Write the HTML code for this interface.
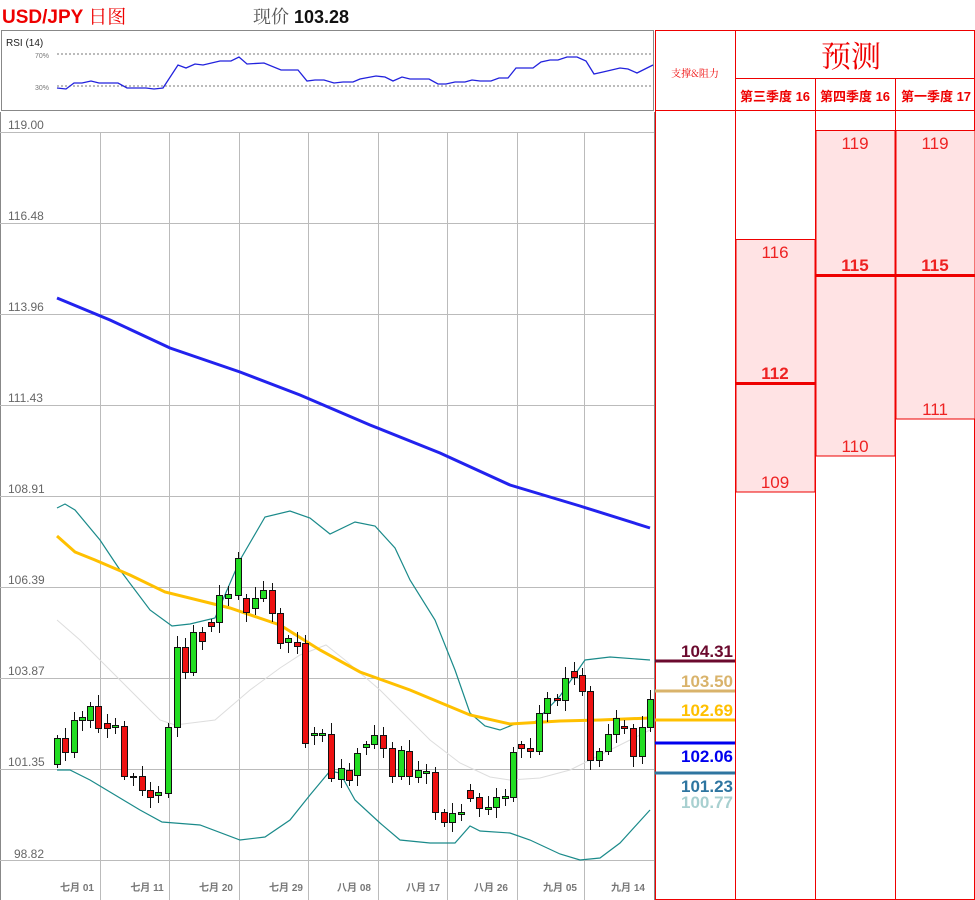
<!DOCTYPE html>
<html><head><meta charset="utf-8"><style>
body{margin:0;width:975px;height:900px;background:#fff;position:relative;overflow:hidden;font-family:"Liberation Sans","Noto Sans CJK SC",sans-serif}
.a{position:absolute}
.t{color:#e00;text-align:center}
</style></head><body>
<div class="a" style="left:2px;top:2px;font-size:19px;font-weight:bold;color:#e00;">USD/JPY <span style="font-family:'Noto Serif CJK SC',serif;font-weight:normal">日图</span></div>
<div class="a" style="left:253px;top:3px;font-size:18px;color:#555;"><span style="font-family:'Noto Serif CJK SC',serif">现价</span> <b style="color:#111">103.28</b></div>

<svg class="a" style="left:0;top:0" width="975" height="900">
<!-- RSI box -->
<rect x="1.5" y="30.5" width="652" height="80" fill="#fff" stroke="#888"/>
<text x="6" y="46" font-size="10" fill="#222" font-family="Liberation Sans">RSI (14)</text>
<text x="35" y="58" font-size="7" fill="#777">70%</text>
<text x="35" y="90" font-size="7" fill="#777">30%</text>
<line x1="57" y1="54" x2="653" y2="54" stroke="#777" stroke-dasharray="2,2"/>
<line x1="57" y1="86" x2="653" y2="86" stroke="#777" stroke-dasharray="2,2"/>
<polyline fill="none" stroke="#22d" stroke-width="1.3" points="57,88 66,89 74,83 82,83 91,81 99,83 118,83 127,88 146,88 154,89 163,88 178,65 186,68 195,64 203,65 220,61 231,61 239,57 247,64 264,63 281,70 298,70 307,81 315,80 324,80 334,83 343,82 353,82 360,79 376,76 385,77 393,81 402,77 410,79 429,79 438,84 446,84 455,82 465,82 472,80 480,81 491,81 499,78 508,78 516,68 533,68 541,62 550,60 558,60 567,57 577,57 586,61 594,74 603,72 620,68 628,69 637,73 653,65"/>
<!-- main chart frame -->
<line x1="0.5" y1="112" x2="0.5" y2="900" stroke="#888"/>
<line x1="654.5" y1="112" x2="654.5" y2="900" stroke="#888"/>
<g stroke="#bbb" stroke-width="1">
<line x1="0" y1="132.5" x2="654" y2="132.5"/><line x1="0" y1="223.5" x2="654" y2="223.5"/><line x1="0" y1="314.5" x2="654" y2="314.5"/><line x1="0" y1="405.5" x2="654" y2="405.5"/><line x1="0" y1="496.5" x2="654" y2="496.5"/><line x1="0" y1="587.5" x2="654" y2="587.5"/><line x1="0" y1="678.5" x2="654" y2="678.5"/><line x1="0" y1="769.5" x2="654" y2="769.5"/><line x1="0" y1="860.5" x2="654" y2="860.5"/>
<line x1="100.5" y1="132" x2="100.5" y2="900"/><line x1="169.5" y1="132" x2="169.5" y2="900"/><line x1="239.5" y1="132" x2="239.5" y2="900"/><line x1="308.5" y1="132" x2="308.5" y2="900"/><line x1="378.5" y1="132" x2="378.5" y2="900"/><line x1="447.5" y1="132" x2="447.5" y2="900"/><line x1="517.5" y1="132" x2="517.5" y2="900"/><line x1="584.5" y1="132" x2="584.5" y2="900"/>
</g>
<g font-size="12" fill="#666" font-family="Liberation Sans">
<text x="8" y="129">119.00</text><text x="8" y="220">116.48</text><text x="8" y="311">113.96</text><text x="8" y="402">111.43</text><text x="8" y="493">108.91</text><text x="8" y="584">106.39</text><text x="8" y="675">103.87</text><text x="8" y="766">101.35</text><text x="14" y="858">98.82</text>
</g>
<g font-size="10" fill="#777" font-weight="bold" text-anchor="middle" font-family="Liberation Sans,Noto Sans CJK SC,sans-serif">
<text x="77" y="891">七月 01</text><text x="147" y="891">七月 11</text><text x="216" y="891">七月 20</text><text x="286" y="891">七月 29</text><text x="354" y="891">八月 08</text><text x="423" y="891">八月 17</text><text x="491" y="891">八月 26</text><text x="560" y="891">九月 05</text><text x="628" y="891">九月 14</text>
</g>
<polyline fill="none" stroke="#ddd" stroke-width="1" points="57,620 80,640 110,670 140,700 160,720 175,725 215,720 250,690 280,668 300,655 326,645 345,660 380,690 405,715 430,740 460,763 490,777 510,780 540,778 570,770 600,755 630,740 650,730"/>
<g fill="none" stroke="#1a8a8a" stroke-width="1.2">
<polyline points="57,508 65,504 75,510 100,540 120,570 150,610 172,626 190,624 215,618 240,560 265,517 290,511 310,518 330,534 355,522 375,526 395,548 410,580 435,620 455,670 470,713 485,726 500,730 515,724 535,722 560,696 585,660 610,657 650,660"/>
<polyline points="57,770 70,770 90,780 110,792 120,798 140,810 162,822 200,825 240,840 265,837 290,820 310,795 330,771 340,773 355,800 380,823 400,840 430,843 455,843 470,826 480,831 510,833 530,840 560,854 580,860 600,858 620,843 650,810"/>
</g>
<polyline fill="none" stroke="#22e" stroke-width="3" points="57,298 110,320 170,348 240,372 300,395 370,425 440,453 510,485 580,506 650,528"/>
<polyline fill="none" stroke="#ffc000" stroke-width="3" points="57,536 75,552 95,560 130,575 165,592 230,608 280,625 320,650 360,672 410,690 470,715 510,724 560,721 600,720 650,718"/>
<g id="c" stroke="#111" stroke-width="1"></g>
<!-- support/resistance column -->
<rect x="655.5" y="30.5" width="319" height="869" fill="none" stroke="#e00"/>
<line x1="655" y1="110.5" x2="975" y2="110.5" stroke="#e00"/>
<line x1="735.5" y1="30" x2="735.5" y2="900" stroke="#e00"/>
<line x1="735" y1="78.5" x2="975" y2="78.5" stroke="#e00"/>
<line x1="815.5" y1="78" x2="815.5" y2="900" stroke="#e00"/>
<line x1="895.5" y1="78" x2="895.5" y2="900" stroke="#e00"/>
<rect x="736" y="239.5" width="79" height="252.5" fill="#ffe3e4" stroke="#e00"/>
<rect x="816" y="130.5" width="79" height="325.5" fill="#ffe3e4" stroke="#e00"/>
<rect x="896" y="130.5" width="79" height="288.5" fill="#ffe3e4" stroke="#e00"/>
<line x1="736" y1="383.5" x2="815" y2="383.5" stroke="#e00" stroke-width="3"/>
<line x1="816" y1="275.5" x2="975" y2="275.5" stroke="#e00" stroke-width="3"/>
<g font-size="10" fill="#e00" font-family="Noto Serif CJK SC,serif" text-anchor="middle"><text x="695" y="77">支撑&amp;阻力</text></g>
<text x="851" y="67" font-size="30" fill="#e00" text-anchor="middle" font-family="Noto Serif CJK SC,serif">预测</text>
<g font-size="13" fill="#e00" font-weight="bold" text-anchor="middle" font-family="Liberation Sans,Noto Sans CJK SC,sans-serif">
<text x="775" y="101">第三季度 16</text><text x="855" y="101">第四季度 16</text><text x="936" y="101">第一季度 17</text>
</g>
<g font-size="17" fill="#e22" text-anchor="middle" font-family="Liberation Sans">
<text x="775" y="258">116</text><text x="775" y="488">109</text><text x="855" y="149">119</text><text x="855" y="452">110</text><text x="935" y="149">119</text><text x="935" y="415">111</text>
<text x="775" y="379" font-weight="bold">112</text><text x="855" y="271" font-weight="bold">115</text><text x="935" y="271" font-weight="bold">115</text>
</g>
<line x1="655" y1="661" x2="735" y2="661" stroke="#6b0a2e" stroke-width="3"/>
<line x1="655" y1="691" x2="735" y2="691" stroke="#d9b36b" stroke-width="3"/>
<line x1="655" y1="720" x2="735" y2="720" stroke="#ffc000" stroke-width="3"/>
<line x1="655" y1="743" x2="735" y2="743" stroke="#0000ee" stroke-width="3"/>
<line x1="655" y1="773" x2="735" y2="773" stroke="#2e75a0" stroke-width="3"/>
<g font-size="17" font-weight="bold" text-anchor="end" font-family="Liberation Sans">
<text x="733" y="657" fill="#6b0a2e">104.31</text><text x="733" y="687" fill="#d9b36b">103.50</text><text x="733" y="716" fill="#ffc000">102.69</text><text x="733" y="762" fill="#0000ee">102.06</text><text x="733" y="792" fill="#2e75a0">101.23</text><text x="733" y="808" fill="#a8d0d0">100.77</text>
</g>
</svg>
<script>
var d=[[57,'G',738,764],[65,'R',738,752],[74,'G',720,752],[82,'G',717,720],[90,'G',706,720],[98,'R',706,728],[107,'R',723,728],[115,'G',725,727],[124,'R',726,776],[133,'R',776,777],[142,'R',776,790],[150,'R',790,797],[158,'G',792,795],[168,'G',727,793],[177,'G',647,727],[185,'R',647,672],[193,'G',632,672],[202,'R',632,641],[211,'R',622,626],[219,'G',595,622],[228,'G',594,598],[238,'G',558,595],[246,'R',598,612],[255,'G',598,608],[263,'G',590,598],[272,'R',590,613],[280,'R',613,643],[288,'G',638,642],[297,'R',642,646],[305,'R',643,743],[314,'G',733,735],[322,'G',733,735],[331,'R',734,778],[341,'G',768,779],[349,'R',770,780],[357,'G',753,775],[366,'G',744,747],[374,'G',735,744],[383,'R',735,748],[392,'R',748,776],[401,'G',750,776],[409,'R',751,776],[418,'G',770,777],[426,'G',771,773],[435,'R',772,812],[444,'R',812,822],[452,'G',813,822],[461,'G',812,814],[470,'R',790,798],[479,'R',797,808],[488,'G',807,809],[496,'G',797,807],[505,'G',796,798],[513,'G',752,797],[521,'R',744,748],[530,'R',748,751],[539,'G',713,751],[547,'G',698,713],[557,'R',698,700],[565,'G',678,700],[574,'R',671,677],[582,'R',675,691],[590,'R',691,760],[599,'G',751,760],[608,'G',734,751],[616,'G',718,734],[624,'R',726,728],[633,'R',728,756],[642,'G',727,756],[650,'G',699,727]];
var s='';d.forEach(function(c,i){var w=3+((i*7)%9);s+='<line x1="'+c[0]+'.5" y1="'+(c[2]-w)+'" x2="'+c[0]+'.5" y2="'+(c[3]+4+((i*5)%8))+'"/>';s+='<rect x="'+(c[0]-3)+'.5" y="'+c[2]+'.5" width="6" height="'+Math.max(1,c[3]-c[2])+'" fill="'+(c[1]=='G'?'#22dd22':'#ee1111')+'"/>';});
document.getElementById('c').innerHTML=s;
</script>
</body></html>
